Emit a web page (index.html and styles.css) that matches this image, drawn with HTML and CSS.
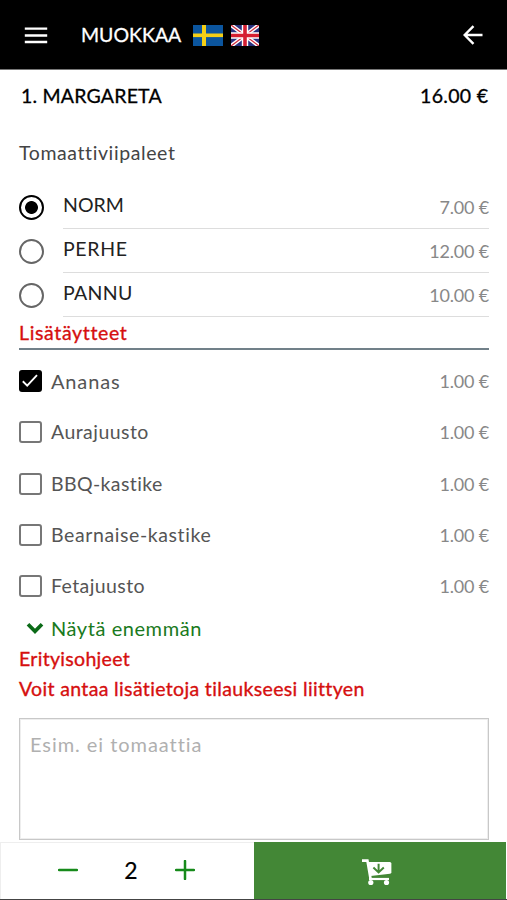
FILE: index.html
```html
<!DOCTYPE html>
<html lang="fi">
<head>
<meta charset="utf-8">
<meta name="viewport" content="width=device-width">
<title>Muokkaa</title>
<link rel="stylesheet" href="styles.css">
</head>
<body>
<header class="topbar">
  <svg class="menu" width="24" height="18" viewBox="0 0 24 18"><path d="M.8 2.6h22.4M.8 9.5h22.4M.8 16h22.4" stroke="#fff" stroke-width="2.3"/></svg>
  <h1 class="heading"><span class="t-muokkaa">MUOKKAA</span></h1>
  <svg class="flag-se" width="30" height="21" viewBox="0 0 30 21"><path fill="#0b559e" d="M0 0h30v21H0z"/><path fill="#f4cf16" d="M9 0h4v21H9z"/><path fill="#f4cf16" d="M0 8.5h30v3.6H0z"/></svg>
  <svg class="flag-gb" width="28" height="21" viewBox="0 0 28 21"><path fill="#29317f" d="M0 0h28v21H0z"/><path d="m0 0 28 21M28 0 0 21" stroke="#fff" stroke-width="4"/><path d="m0 0 28 21M28 0 0 21" stroke="#d22b3d" stroke-width="1.3"/><path d="M14 0v21M0 10.5h28" stroke="#fff" stroke-width="6.4"/><path d="M14 0v21M0 10.5h28" stroke="#d51f32" stroke-width="3.6"/></svg>
  <svg class="back" width="20" height="20" viewBox="0 0 20 20" fill="none" stroke="#fff" stroke-width="2.4"><path d="M19.5 10H2M10.5 1.2 1.7 10l8.8 8.8"/></svg>
</header>
<main class="content">
  <div class="product"><span class="t-margareta">1. MARGARETA</span><span class="total">16.00 €</span></div>
  <p class="description"><span class="t-tomato">Tomaattiviipaleet</span></p>
  <div class="sizes">
    <label class="size"><span class="radio on"></span><span class="size-body"><span class="t-norm">NORM</span><span class="price">7.00 €</span></span></label>
    <label class="size"><span class="radio"></span><span class="size-body"><span class="t-perhe">PERHE</span><span class="price">12.00 €</span></span></label>
    <label class="size"><span class="radio"></span><span class="size-body"><span class="t-pannu">PANNU</span><span class="price">10.00 €</span></span></label>
  </div>
  <h2 class="section"><span class="t-lisa">Lisätäytteet</span></h2>
  <div class="extras">
    <label class="extra"><span class="box on"><svg width="22" height="22" viewBox="0 0 22 22"><path d="m3.8 11.3 4.4 4.3L18 5.2" fill="none" stroke="#fff" stroke-width="1.9"/></svg></span><span class="t-ananas">Ananas</span><span class="price">1.00 €</span></label>
    <label class="extra"><span class="box"></span><span class="t-aura">Aurajuusto</span><span class="price">1.00 €</span></label>
    <label class="extra"><span class="box"></span><span class="t-bbq">BBQ-kastike</span><span class="price">1.00 €</span></label>
    <label class="extra"><span class="box"></span><span class="t-bearnaise">Bearnaise-kastike</span><span class="price">1.00 €</span></label>
    <label class="extra"><span class="box"></span><span class="t-feta">Fetajuusto</span><span class="price">1.00 €</span></label>
  </div>
  <div class="more"><svg width="18" height="12" viewBox="0 0 18 12"><path d="m2 2.3 7 7 7-7" fill="none" stroke="#0b6a17" stroke-width="3.7"/></svg><span class="t-more">Näytä enemmän</span></div>
  <div class="notes"><p><span class="t-erityis">Erityisohjeet</span></p><p><span class="t-voit">Voit antaa lisätietoja tilaukseesi liittyen</span></p></div>
  <div class="note-field"><span class="t-esim">Esim. ei tomaattia</span></div>
</main>
<footer class="actions">
  <div class="quantity">
    <svg width="20" height="20" viewBox="0 0 20 20"><path d="M1 10h18" stroke="#178a1b" stroke-width="2.5" stroke-linecap="round"/></svg>
    <span class="count">2</span>
    <svg width="20" height="20" viewBox="0 0 20 20"><path d="M1 10h18M10 1v18" stroke="#178a1b" stroke-width="2.5" stroke-linecap="round"/></svg>
  </div>
  <div class="cart"><svg width="31" height="27" viewBox="0 0 31 27"><path d="M1 1.6h5.4L9.6 20" fill="none" stroke="#fff" stroke-width="2.6"/><path d="M7.5 3h21.3q1.6 0 1.6 1.5v8.7q0 1.4-1.4 1.6L9.6 17z" fill="#fff"/><path d="M8 20h20" stroke="#fff" stroke-width="2.2"/><circle cx="9.8" cy="23.5" r="2.6" fill="#fff"/><circle cx="25.5" cy="23.5" r="2.6" fill="#fff"/><path d="M17.6 4.8v8M12.4 8.6l5.2 4.8 5.2-4.8" fill="none" stroke="#438736" stroke-width="2"/></svg></div>
</footer>
</body>
</html>
```
FILE: styles.css
```css
* { box-sizing: border-box; }
body { margin: 0; height: 900px; overflow: hidden; display: flex; flex-direction: column; background: #fff; color: #000; font: 19.5px/26px Lato, "Noto Sans", sans-serif; font-variant-ligatures: none; }
h1, h2, p { margin: 0; font: inherit; }
svg { display: block; flex: none; }
span { white-space: nowrap; }
.topbar { height: 70px; flex: none; display: flex; align-items: center; padding: 1px 24px 0; background: #000; color: #fff; border-bottom: 1px solid #777; }
.heading { width: 112px; margin-left: 33px; -webkit-text-stroke: .3px; }
.flag-gb { margin-left: 8px; }
.back { margin-left: auto; }
.content { flex: 1; min-height: 0; padding: 13px 18px 0 19px; display: flex; flex-direction: column; }
.product { height: 26px; flex: none; display: flex; justify-content: space-between; padding: 0 1px 0 2px; -webkit-text-stroke: .3px; }
.t-margareta { letter-spacing: .2px; }
.total { letter-spacing: .3px; margin-right: -.3px; }
.description { margin-top: 31px; height: 26px; flex: none; color: #444; }
.t-tomato { letter-spacing: .6px; }
.sizes { margin-top: 19px; flex: none; }
.size { height: 44px; display: flex; align-items: center; color: #222; }
.t-perhe { letter-spacing: .65px; }
.t-pannu { letter-spacing: .3px; }
.radio { width: 25px; height: 25px; flex: none; border: 2px solid #666; border-radius: 50%; }
.radio.on { border-color: #000; background: radial-gradient(circle, #000 6px, transparent 6.8px); }
.size-body { height: 44px; flex: 1; display: flex; justify-content: space-between; padding: 7px 0 0; margin-left: 19px; border-bottom: 1px solid #ddd; }
.price { color: #888; font-size: 18px; letter-spacing: -.2px; margin-left: auto; }
.size .price { padding-top: 2px; }
.section { flex: none; height: 33px; padding-top: 3px; border-bottom: 2px solid #718089; color: #d60f0f; -webkit-text-stroke: .35px; }
.t-lisa { letter-spacing: .65px; }
.extras { flex: none; padding-top: 5.4px; margin-bottom: .6px; }
.extra { height: 51.25px; display: flex; align-items: center; color: #555; }
.t-ananas { font-size: 20px; letter-spacing: .85px; }
.t-aura { letter-spacing: .45px; }
.t-bbq { letter-spacing: .38px; }
.t-bearnaise { letter-spacing: .6px; }
.t-feta { letter-spacing: .4px; }
.box { width: 23px; height: 22px; flex: none; border: 2px solid #777; border-radius: 3px; margin-right: 9px; }
.box.on { border: 0; background: #000; }
.more { height: 26px; flex: none; display: flex; align-items: center; padding-left: 7px; margin-top: 3px; color: #197a20; }
.more svg { margin-right: 7px; }
.t-more { font-size: 20px; letter-spacing: .57px; }
.notes { flex: none; padding-top: 5px; color: #d60f0f; -webkit-text-stroke: .35px; }
.notes p { height: 30px; }
.t-erityis { letter-spacing: .3px; }
.t-voit { letter-spacing: .35px; }
.note-field { height: 122px; flex: none; margin-top: 12px; padding: 12px 10px; border: 1px solid #c8c8c8; box-shadow: inset 0 0 0 1px #eee; color: #b0b0b0; }
.t-esim { font-size: 20px; letter-spacing: .95px; }
.actions { height: 58px; flex: none; display: flex; border-bottom: 1px solid #444; background: #fff; }
.quantity { width: 254px; display: flex; align-items: center; padding: 0 0 2px 57px; border: solid #eee; border-width: 1px 0 0 1px; }
.count { width: 97px; padding-left: 9px; text-align: center; font-size: 23px; -webkit-text-stroke: .2px; }
.cart { flex: 1; display: flex; align-items: center; justify-content: center; padding: 3px 8px 0 0; background: #438736; margin-right: 1px; }
```
